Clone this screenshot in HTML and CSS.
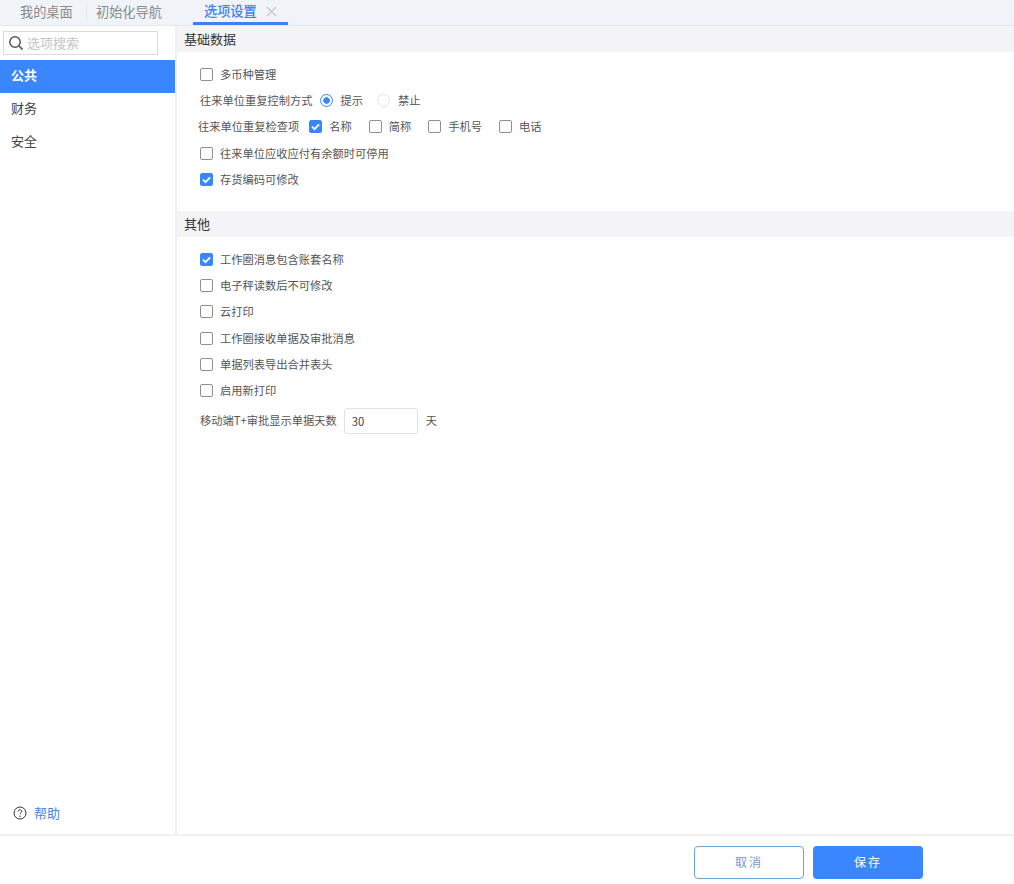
FILE: index.html
```html
<!DOCTYPE html>
<html lang="zh">
<head>
<meta charset="utf-8">
<title>选项设置</title>
<link rel="stylesheet" href="styles.css">
</head>
<body>
<div class="app">
  <nav class="tabs">
    <span class="tab tab-first">我的桌面</span>
    <span class="tab-sep"></span>
    <span class="tab tab-second">初始化导航</span>
    <span class="tab-sep tab-sep-wide"></span>
    <span class="tab tab-active">选项设置<svg class="tab-close" width="11" height="11" viewBox="0 0 11 11"><path d="M1 1l9 9M10 1l-9 9" stroke="#c3c8ce" stroke-width="1.3" fill="none"/></svg></span>
  </nav>
  <div class="main">
    <aside class="side">
      <div class="search">
        <svg width="16" height="16" viewBox="0 0 16 16"><circle cx="7" cy="7" r="5.2" stroke="#555" stroke-width="1.5" fill="none"/><path d="M11 11l3.6 3.6" stroke="#555" stroke-width="1.6" fill="none"/></svg>
        <span class="search-text">选项搜索</span>
      </div>
      <div class="menu-item menu-active">公共</div>
      <div class="menu-item">财务</div>
      <div class="menu-item">安全</div>
      <div class="help">
        <svg width="14" height="14" viewBox="0 0 14 14"><circle cx="7" cy="7" r="6" stroke="#333" stroke-width="1" fill="none"/><path d="M5.2 5.5c0-1 .8-1.7 1.8-1.7s1.8.7 1.8 1.6c0 1.3-1.8 1.3-1.8 2.8" stroke="#333" stroke-width="1" fill="none"/><circle cx="7" cy="10.2" r=".7" fill="#333"/></svg>
        <span class="help-text">帮助</span>
      </div>
    </aside>
    <section class="content">
      <h2 class="sec-head">基础数据</h2>
      <div class="sec-body sec-basic">
        <label class="row"><span class="cb"></span><span class="lbl">多币种管理</span></label>
        <div class="row">
          <span class="field field-radio">往来单位重复控制方式</span>
          <span class="radio radio-on"></span><span class="lbl opt-a">提示</span>
          <span class="radio"></span><span class="lbl">禁止</span>
        </div>
        <div class="row row-check">
          <span class="field">往来单位重复检查项</span>
          <span class="cb cb-on"><svg width="13" height="13" viewBox="0 0 13 13"><path d="M3 6.6l2.5 2.5 4.6-4.8" stroke="#fff" stroke-width="1.9" fill="none"/></svg></span><span class="lbl opt-b">名称</span>
          <span class="cb"></span><span class="lbl opt-b">简称</span>
          <span class="cb"></span><span class="lbl opt-b">手机号</span>
          <span class="cb"></span><span class="lbl">电话</span>
        </div>
        <label class="row"><span class="cb"></span><span class="lbl">往来单位应收应付有余额时可停用</span></label>
        <label class="row"><span class="cb cb-on"><svg width="13" height="13" viewBox="0 0 13 13"><path d="M3 6.6l2.5 2.5 4.6-4.8" stroke="#fff" stroke-width="1.9" fill="none"/></svg></span><span class="lbl">存货编码可修改</span></label>
      </div>
      <h2 class="sec-head">其他</h2>
      <div class="sec-body sec-other">
        <label class="row"><span class="cb cb-on"><svg width="13" height="13" viewBox="0 0 13 13"><path d="M3 6.6l2.5 2.5 4.6-4.8" stroke="#fff" stroke-width="1.9" fill="none"/></svg></span><span class="lbl">工作圈消息包含账套名称</span></label>
        <label class="row"><span class="cb"></span><span class="lbl">电子秤读数后不可修改</span></label>
        <label class="row"><span class="cb"></span><span class="lbl">云打印</span></label>
        <label class="row"><span class="cb"></span><span class="lbl">工作圈接收单据及审批消息</span></label>
        <label class="row"><span class="cb"></span><span class="lbl">单据列表导出合并表头</span></label>
        <label class="row"><span class="cb"></span><span class="lbl">启用新打印</span></label>
        <div class="row row-input">
          <span class="field field-input">移动端T+审批显示单据天数</span>
          <span class="num">30</span>
          <span class="lbl">天</span>
        </div>
      </div>
    </section>
  </div>
  <footer class="foot">
    <button class="btn btn-cancel">取消</button>
    <button class="btn btn-save">保存</button>
  </footer>
</div>
</body>
</html>
```
FILE: styles.css
```css
* { box-sizing: border-box; }
html, body { margin: 0; height: 100%; }
body {
  font-family: "Noto Sans CJK SC", "Liberation Sans", sans-serif;
  font-size: 11.25px;
  color: #555;
  background: #fff;
}
.app { width: 1014px; height: 884px; display: flex; flex-direction: column; overflow: hidden; }

.tabs {
  height: 26px;
  flex: none;
  display: flex;
  align-items: stretch;
  background: #f0f4f8;
  border-bottom: 1px solid #e3e8ee;
  font-size: 13.2px;
  color: #8a8a8a;
}
.tab { display: flex; align-items: center; line-height: 24px; padding-bottom: 2px; }
.tab-first { padding-left: 20px; width: 86px; }
.tab-sep { width: 1px; height: 16px; margin-top: 4px; background: #e6e9ed; }
.tab-second { padding-left: 9px; width: 105px; }
.tab-sep-wide { background: transparent; width: 1px; }
.tab-active {
  color: #3b82f0;
  font-weight: 500;
  padding: 0 0 0 11px;
  width: 95px;
  height: 25px;
  border-bottom: 3px solid #3b82f0;
}
.tab-close { margin-left: 9px; }

.main { flex: 1; display: flex; min-height: 0; }
.side {
  width: 177px;
  flex: none;
  display: flex;
  flex-direction: column;
  border-right: 2px solid #f0f0f2;
  background: #fff;
}
.search {
  margin: 5px 0 5px 3px;
  width: 155px;
  height: 24px;
  border: 1px solid #dcdcdc;
  display: flex;
  align-items: center;
  gap: 3px;
  padding-left: 4px;
}
.search-text { color: #c4c4c4; font-size: 13px; padding-bottom: 2px; }
.menu-item {
  height: 33px;
  padding: 0 0 5px 11px;
  display: flex;
  align-items: center;
  font-size: 13px;
  color: #444;
}
.menu-active { background: #3a86ff; color: #fff; font-weight: 700; }
.help { margin-top: auto; height: 28px; padding: 0 0 0 13px; display: flex; align-items: flex-start; gap: 7px; }
.help-text { color: #4a86e0; font-size: 13px; line-height: 16px; margin-top: -1px; }

.content { flex: 1; min-width: 0; background: #fff; }
.sec-head {
  margin: 0;
  height: 26px;
  padding: 0 0 2px 7px;
  display: flex;
  align-items: center;
  background: #f4f4f6;
  font-size: 13px;
  font-weight: 400;
  color: #333;
}
.sec-body { padding: 9px 0 0 23px; }
.sec-basic { height: 159px; }
.row { height: 26.3px; display: flex; align-items: center; }
.cb {
  width: 13px;
  height: 13px;
  flex: none;
  border: 1px solid #8f8f8f;
  border-radius: 2px;
  background: #fff;
  margin-right: 7px;
  display: flex;
  align-items: center;
  justify-content: center;
}
.cb svg { flex: none; }
.cb-on { background: #3a86ff; border-color: #3a86ff; }
.lbl { line-height: 16px; padding-bottom: 1px; }
.field { margin-left: -2px; margin-right: 10px; padding-bottom: 1px; }
.field-radio { margin-left: 0; margin-right: 7px; }
.field-input { margin-left: 0; margin-right: 7px; }
.radio {
  width: 13px;
  height: 13px;
  flex: none;
  border: 1px solid #e4e4e4;
  border-radius: 50%;
  margin-right: 8px;
  background: #fff;
}
.radio-on { border-color: #3a86ff; background: radial-gradient(circle, #3a86ff 0 3px, #fff 3.5px); }
.opt-a { margin-right: 14px; }
.opt-b { margin-right: 17px; }
.row-input { height: 34px; margin-top: 0; }
.num {
  width: 74px;
  height: 26px;
  border: 1px solid #e2e2e2;
  border-radius: 3px;
  padding-left: 7px;
  line-height: 24px;
  margin-right: 8px;
  color: #444;
}

.foot {
  height: 50px;
  flex: none;
  display: flex;
  justify-content: flex-end;
  align-items: flex-start;
  gap: 9px;
  padding: 10px 91px 0 0;
  border-top: 2px solid #f0f0f2;
  background: #fff;
}
.btn {
  width: 110px;
  height: 33px;
  border-radius: 4px;
  font: inherit;
  font-size: 12px;
  letter-spacing: 2px;
  padding: 0 0 2px;
}
.btn-cancel { background: #fff; color: #7d95c9; border: 1px solid #6da2e0; }
.btn-save { background: #3a86ff; color: #fff; border: none; }
```
